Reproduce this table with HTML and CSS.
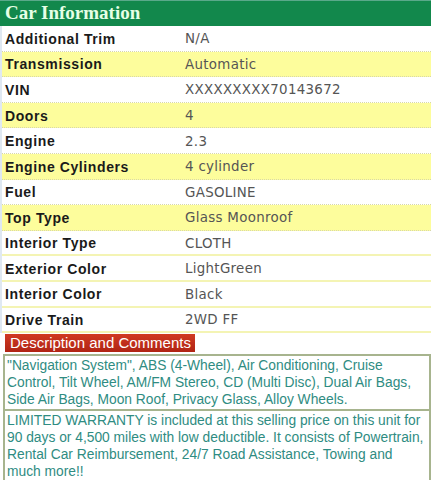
FILE: index.html
```html
<!DOCTYPE html>
<html>
<head>
<meta charset="utf-8">
<link rel="stylesheet" href="styles.css">
</head>
<body>
<div class="page">
  <div class="header">Car Information</div>
  <div class="table">
    <div class="row dot"><div class="label">Additional Trim</div><div class="value">N/A</div></div>
    <div class="row yellow dot"><div class="label">Transmission</div><div class="value">Automatic</div></div>
    <div class="row dot"><div class="label">VIN</div><div class="value">XXXXXXXXX70143672</div></div>
    <div class="row yellow dot"><div class="label">Doors</div><div class="value">4</div></div>
    <div class="row dot"><div class="label">Engine</div><div class="value">2.3</div></div>
    <div class="row yellow dot"><div class="label">Engine Cylinders</div><div class="value">4 cylinder</div></div>
    <div class="row dot"><div class="label">Fuel</div><div class="value">GASOLINE</div></div>
    <div class="row yellow dot"><div class="label">Top Type</div><div class="value">Glass Moonroof</div></div>
    <div class="row solid"><div class="label">Interior Type</div><div class="value">CLOTH</div></div>
    <div class="row solid"><div class="label">Exterior Color</div><div class="value">LightGreen</div></div>
    <div class="row solid"><div class="label">Interior Color</div><div class="value">Black</div></div>
    <div class="row solid"><div class="label">Drive Train</div><div class="value">2WD FF</div></div>
  </div>
  <div class="desc-head"><span class="desc-title">Description and Comments</span></div>
  <div class="box box1">"Navigation System", ABS (4-Wheel), Air Conditioning, Cruise Control, Tilt Wheel, AM/FM Stereo, CD (Multi Disc), Dual Air Bags, Side Air Bags, Moon Roof, Privacy Glass, Alloy Wheels.</div>
  <div class="box box2">LIMITED WARRANTY is included at this selling price on this unit for 90 days or 4,500 miles with low deductible. It consists of Powertrain, Rental Car Reimbursement, 24/7 Road Assistance, Towing and much more!!</div>
</div>
</body>
</html>
```

FILE: styles.css
```css
html, body {
  margin: 0;
  padding: 0;
  background: #ffffff;
}
.page {
  width: 431px;
  display: flex;
  flex-direction: column;
}
.header {
  height: 25px;
  background: #12884c;
  border-top: 1px solid #5aa98a;
  color: #e6ffe6;
  font-family: "Liberation Serif", serif;
  font-weight: bold;
  font-size: 19px;
  line-height: 23px;
  padding-left: 5px;
}
.table {
  display: flex;
  flex-direction: column;
  border-left: 2px solid #dfe8f2;
}
.row {
  height: 25.6px;
  box-sizing: border-box;
  display: flex;
  align-items: center;
  padding-top: 1px;
}
.row.dot {
  border-bottom: 1px dotted #d8d8a8;
}
.row.solid {
  border-bottom: 2px solid #f4f4b4;
}
.row.yellow {
  background: #fdfd9c;
}
.label {
  width: 180px;
  padding-left: 3px;
  font-family: "Liberation Sans", Arial, sans-serif;
  font-weight: bold;
  font-size: 14px;
  color: #1a1a1a;
  letter-spacing: 0.6px;
}
.value {
  font-family: "DejaVu Sans", Verdana, sans-serif;
  font-size: 13.4px;
  color: #555555;
  letter-spacing: 0.3px;
}
.desc-head {
  padding: 1px 0 2px 5px;
  display: flex;
}
.desc-title {
  background: linear-gradient(#d03a22, #b02414);
  color: #ffffff;
  font-family: "Liberation Sans", Arial, sans-serif;
  font-size: 15px;
  line-height: 18px;
  padding: 0 4px 0 5px;
  white-space: nowrap;
}
.box {
  margin-left: 3px;
  border: 2px solid #a7b48e;
  color: #2f8c82;
  font-family: "Liberation Sans", Arial, sans-serif;
  font-size: 13.8px;
  line-height: 17px;
  padding: 1px 3px 1px 2px;
}
.box2 {
  border-top: none;
  padding-bottom: 5px;
}
```
